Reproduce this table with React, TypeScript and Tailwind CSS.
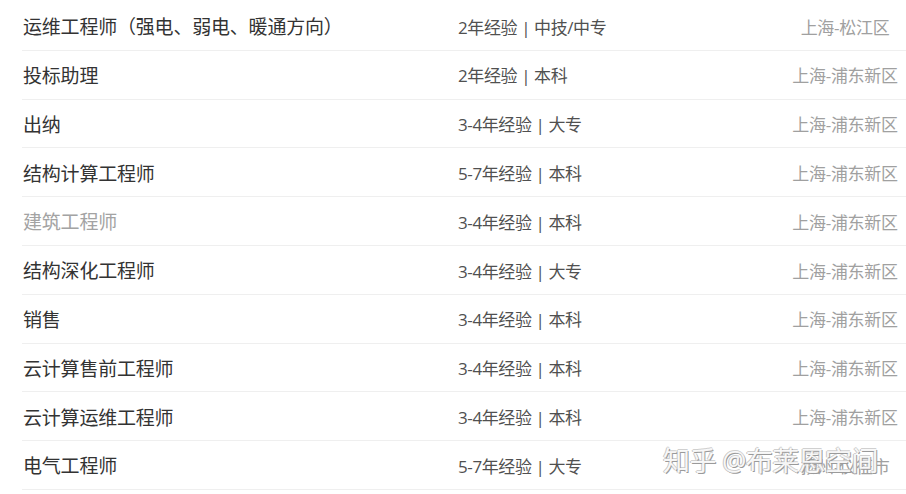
const ROWS = [
  { title: "运维工程师（强电、弱电、暖通方向）", meta: "2年经验 | 中技/中专", city: "上海-松江区" },
  { title: "投标助理", meta: "2年经验 | 本科", city: "上海-浦东新区" },
  { title: "出纳", meta: "3-4年经验 | 大专", city: "上海-浦东新区" },
  { title: "结构计算工程师", meta: "5-7年经验 | 本科", city: "上海-浦东新区" },
  { title: "建筑工程师", meta: "3-4年经验 | 本科", city: "上海-浦东新区", visited: true },
  { title: "结构深化工程师", meta: "3-4年经验 | 大专", city: "上海-浦东新区" },
  { title: "销售", meta: "3-4年经验 | 本科", city: "上海-浦东新区" },
  { title: "云计算售前工程师", meta: "3-4年经验 | 本科", city: "上海-浦东新区" },
  { title: "云计算运维工程师", meta: "3-4年经验 | 本科", city: "上海-浦东新区" },
  { title: "电气工程师", meta: "5-7年经验 | 大专", city: "扬州-仪征市" },
];

export default function App() {
  return (
    <div
      className="relative h-[494px] w-[906px] overflow-hidden bg-white pl-[22px] pt-[2px]"
      style={{ fontFamily: '"Open Sans", "Noto Sans CJK SC", sans-serif' }}
    >
      <ul className="flex flex-col">
        {ROWS.map((row) => (
          <li
            key={row.title}
            className="flex h-[48.8px] items-center border-b border-[#efefef] pt-[3px]"
          >
            <span
              className={`w-[436px] shrink-0 pl-[1px] text-[19px] tracking-[-0.2px] ${
                row.visited ? "text-[#a3a3a3]" : "text-[#333333]"
              }`}
            >
              {row.title}
            </span>
            <span className="w-[300px] shrink-0 text-[17px] tracking-[-0.4px] text-[#505050]">
              {row.meta}
            </span>
            <span className="w-[174px] shrink-0 text-center text-[17px] tracking-[-0.3px] text-[#a0a0a0]">
              {row.city}
            </span>
          </li>
        ))}
      </ul>
      <div
        className="absolute left-[663px] top-[441px] text-[27px] tracking-[-0.6px] text-white/90"
        style={{
          textShadow:
            "1px 1px 0 #9a9a9a, -1px 0 0 #c4c4c4, 0 -1px 0 #d0d0d0",
        }}
      >
        知乎 @布莱恩空间
      </div>
    </div>
  );
}
